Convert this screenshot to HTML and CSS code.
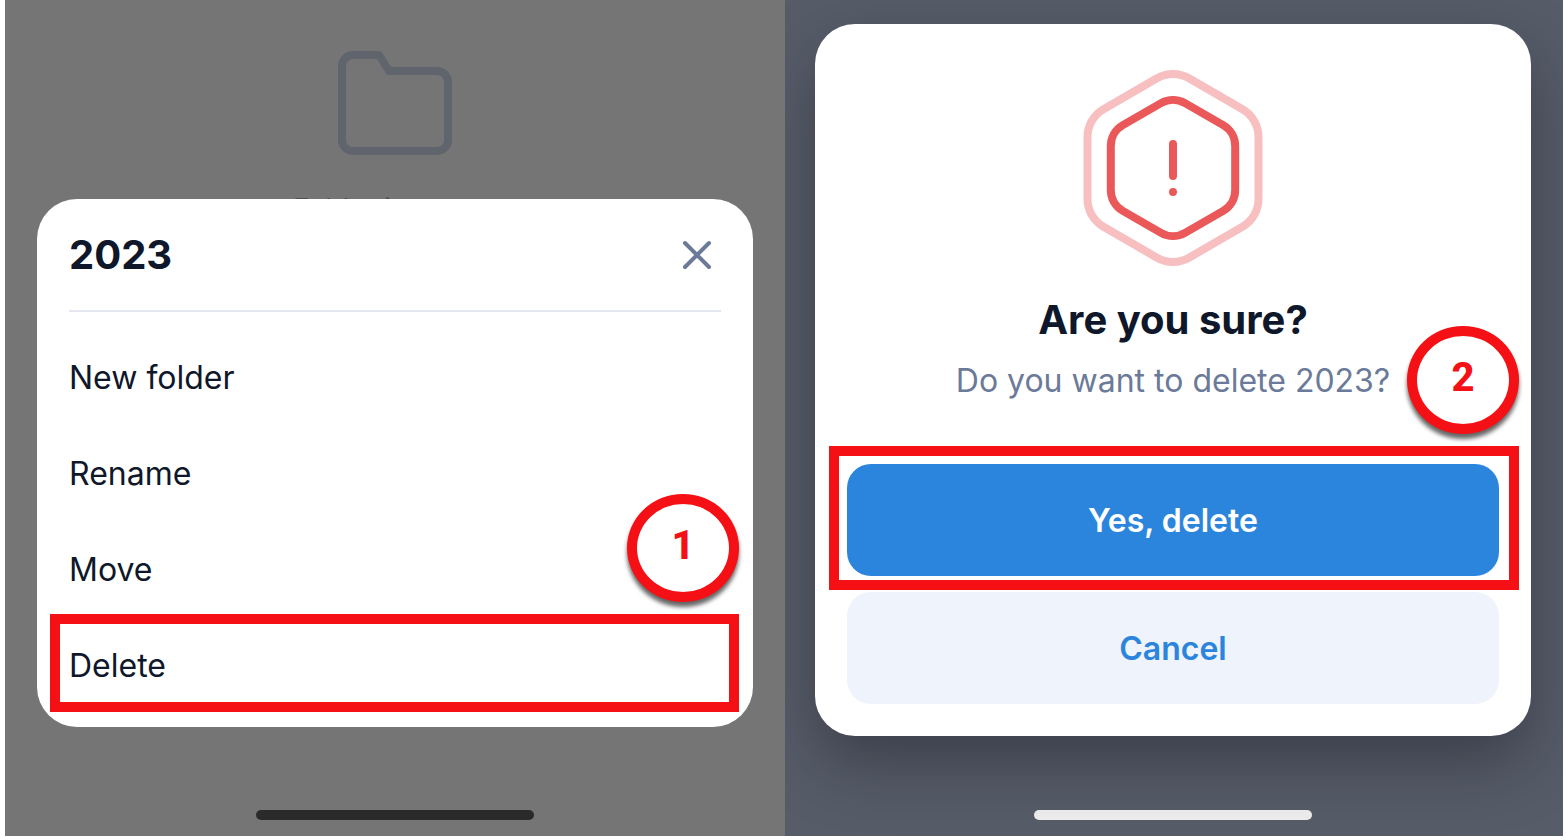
FILE: index.html
```
<!DOCTYPE html>
<html lang="en">
<head>
  <meta charset="UTF-8">
  <meta name="viewport" content="width=device-width, initial-scale=1.0">
  <title>Delete a folder</title>
  <link rel="stylesheet" href="styles.css">
</head>
<body>
  <main class="steps">
    <!-- Step 1: folder menu -->
    <section class="screen screen-menu">
      <div class="empty-state">
        <svg class="folder-icon" viewBox="0 0 116 106" aria-hidden="true">
          <path d="M15 5H42L52 21H100A11 11 0 0 1 111 32V90A11 11 0 0 1 100 101H16A11 11 0 0 1 5 90V16A11 11 0 0 1 16 5Z"/>
        </svg>
        <p>Folder is empty</p>
      </div>

      <div class="card menu-card">
        <header class="menu-header">
          <h2>2023</h2>
          <button class="close-btn" type="button" aria-label="Close">
            <svg viewBox="0 0 32 32" aria-hidden="true">
              <path d="M4 4L28 28M28 4L4 28"/>
            </svg>
          </button>
        </header>
        <ul class="menu-list">
          <li><button type="button">New folder</button></li>
          <li><button type="button">Rename</button></li>
          <li><button type="button">Move</button></li>
          <li>
            <button type="button">Delete</button>
            <div class="highlight highlight-item"><span class="badge">1</span></div>
          </li>
        </ul>
      </div>
      <div class="home-bar"></div>
    </section>

    <!-- Step 2: confirmation -->
    <section class="screen screen-confirm">
      <div class="card confirm-card">
        <svg class="warning-icon" viewBox="-90 -98 180 196" aria-hidden="true">
          <path class="hex-outer" d="M-16 -89.7A32 32 0 0 1 16 -89.7L69.5 -58.7A32 32 0 0 1 85.5 -31V31A32 32 0 0 1 69.5 58.7L16 89.7A32 32 0 0 1 -16 89.7L-69.5 58.7A32 32 0 0 1 -85.5 31V-31A32 32 0 0 1 -69.5 -58.7Z"/>
          <path class="hex-inner" d="M-12 -64.9A24 24 0 0 1 12 -64.9L50.2 -42.9A24 24 0 0 1 62.2 -22V22A24 24 0 0 1 50.2 42.9L12 64.9A24 24 0 0 1 -12 64.9L-50.2 42.9A24 24 0 0 1 -62.2 22V-22A24 24 0 0 1 -50.2 -42.9Z"/>
          <path class="hex-inner" d="M0 -24V8M0 24V24"/>
        </svg>
        <h2>Are you sure?</h2>
        <p>Do you want to delete 2023?</p>
        <div class="actions">
          <div class="action">
            <button class="btn btn-primary" type="button">Yes, delete</button>
            <div class="highlight highlight-btn"><span class="badge">2</span></div>
          </div>
          <button class="btn btn-secondary" type="button">Cancel</button>
        </div>
      </div>
      <div class="home-bar"></div>
    </section>
  </main>
</body>
</html>
```
FILE: styles.css
```
* {
  box-sizing: border-box;
}

body {
  margin: 0;
  background-color: #fff;
  color: #0f172a;
  font-family: Inter, sans-serif;
}

h2, p, ul {
  margin: 0;
  padding: 0;
}

h2 {
  font-size: 40px;
  line-height: 48px;
  font-weight: 700;
}

button {
  border: none;
  background: none;
  color: inherit;
  font-family: inherit;
  font-size: 32px;
  cursor: pointer;
}

svg {
  display: block;
  fill: none;
  stroke-linecap: round;
  stroke-linejoin: round;
}

.steps {
  display: grid;
  grid-template-columns: 390fr 389fr;
  min-height: 100vh;
  padding: 0 3px 4px 5px;
}

.screen {
  position: relative;
  display: flex;
  flex-direction: column;
  justify-content: flex-end;
  overflow: hidden;
  padding: 24px 32px 16px;
}

.screen-menu {
  background-color: #757575;
}

.screen-confirm {
  background-color: #565d69;
  padding-left: 30px;
}

.card {
  position: relative;
  border-radius: 40px;
  background-color: #fff;
}

.home-bar {
  align-self: center;
  width: 278px;
  height: 10px;
  border-radius: 5px;
}

.screen-menu .home-bar {
  background-color: #2a2a2a;
}

.screen-confirm .home-bar {
  background-color: #eee;
}

/* Folder view behind the menu */
.empty-state {
  position: absolute;
  top: 50px;
  left: 0;
  right: 0;
  color: #4b505b;
  font-size: 28px;
  line-height: 32px;
  text-align: center;
}

.folder-icon {
  width: 116px;
  margin: 0 auto 37px;
  stroke: #60646d;
  stroke-width: 8;
}

/* Menu */
.menu-card {
  margin-bottom: 83px;
  padding: 0 32px 14px;
}

.menu-header {
  display: flex;
  align-items: center;
  justify-content: space-between;
  height: 113px;
  border-bottom: 2px solid #e4e7ef;
}

.close-btn {
  padding: 8px;
}

.close-btn svg {
  width: 32px;
  stroke: #6b7a99;
  stroke-width: 4;
}

.menu-list {
  margin-top: 17px;
  list-style: none;
}

.menu-list li {
  position: relative;
}

.menu-list button {
  width: 100%;
  height: 96px;
  padding: 0;
  text-align: left;
}

/* Confirmation */
.confirm-card {
  margin-bottom: 74px;
  padding: 46px 32px 32px;
  text-align: center;
  box-shadow: 0 28px 64px rgba(18, 12, 22, 0.36);
}

.warning-icon {
  width: 180px;
  margin: 0 auto 30px;
  stroke-width: 8;
}

.hex-outer {
  stroke: #f8bfc1;
}

.hex-inner {
  stroke: #ea5859;
}

.confirm-card p {
  margin-top: 17px;
  color: #6b7a99;
  font-size: 32px;
  line-height: 40px;
}

.actions {
  display: grid;
  gap: 16px;
  margin-top: 63px;
}

.action {
  position: relative;
}

.btn {
  display: block;
  width: 100%;
  height: 112px;
  border-radius: 24px;
  font-weight: 600;
}

.btn-primary {
  background-color: #2b85dd;
  color: #fff;
}

.btn-secondary {
  background-color: #eff3fb;
  color: #2b85dd;
}

/* Step markers */
.highlight {
  position: absolute;
  border: 10px solid #f41014;
  pointer-events: none;
}

.highlight-item {
  inset: -3px -18px 1px -19px;
}

.highlight-btn {
  inset: -18px -20px -14px -18px;
}

.badge {
  position: absolute;
  right: -10px;
  bottom: calc(100% + 22px);
  width: 112px;
  height: 108px;
  border: 10px solid #f41014;
  border-radius: 50%;
  background-color: #fff;
  box-shadow: 0 5px 4px rgba(0, 0, 0, 0.6);
  color: #f41014;
  font-family: Roboto, sans-serif;
  font-size: 40px;
  font-weight: 800;
  line-height: 84px;
  text-align: center;
}
```
